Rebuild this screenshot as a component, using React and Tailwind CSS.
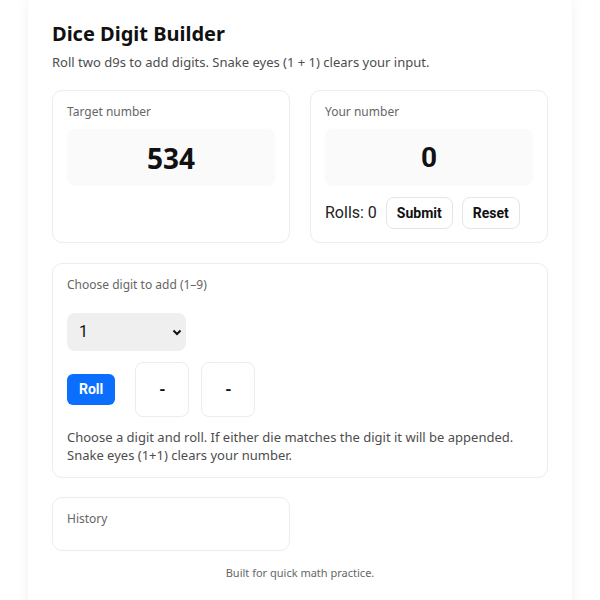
import React, { useState } from "react";

function Card({ className = "", children }) {
  return (
    <div className={`rounded-[10px] border border-[#ececec] bg-white px-[14px] py-[13px] ${className}`}>
      {children}
    </div>
  );
}

function Label({ children }) {
  return <div className="text-[12px] leading-[16px] text-[#666]">{children}</div>;
}

export default function App() {
  const [digit, setDigit] = useState("1");

  return (
    <div className="min-h-screen bg-white font-['Noto_Sans',sans-serif]">
      <div className="mx-auto w-[544px] bg-white px-6 pt-[21px] pb-10 shadow-[0_0_12px_rgba(0,0,0,0.06)]">
        <h1 className="text-[20px] font-bold leading-[26px] text-[#111]">Dice Digit Builder</h1>
        <p className="mt-[6px] text-[13px] leading-[18px] text-[#4d4d4d]">
          Roll two d9s to add digits. Snake eyes (1 + 1) clears your input.
        </p>

        <div className="mt-[19px] grid grid-cols-2 gap-5">
          <Card>
            <Label>Target number</Label>
            <div className="mt-[9px] flex h-[57px] items-center justify-center rounded-lg bg-[#fafafa] text-[28px] font-bold text-[#111]">
              534
            </div>
          </Card>
          <Card>
            <Label>Your number</Label>
            <div className="mt-[9px] flex h-[57px] items-center justify-center rounded-lg bg-[#fafafa] font-['Roboto',sans-serif] text-[28px] font-bold text-[#111]">
              0
            </div>
            <div className="mt-[11px] flex items-center gap-[9px] font-['Roboto',sans-serif]">
              <span className="text-[16px] text-[#222]">Rolls: 0</span>
              <button className="h-8 rounded-lg border border-[#e5e5e5] bg-white px-[10px] text-[14px] font-bold text-[#111]">
                Submit
              </button>
              <button className="h-8 rounded-lg border border-[#e5e5e5] bg-white px-[10px] text-[14px] font-bold text-[#111]">
                Reset
              </button>
            </div>
          </Card>
        </div>

        <Card className="mt-5">
          <Label>Choose digit to add (1–9)</Label>
          <div className="relative mt-5 w-[119px]">
            <select
              value={digit}
              onChange={(e) => setDigit(e.target.value)}
              className="h-[38px] w-full appearance-none rounded-lg bg-[#efefef] pl-[12px] font-['Roboto',sans-serif] text-[16px] text-[#111] outline-none"
            >
              {[1, 2, 3, 4, 5, 6, 7, 8, 9].map((n) => (
                <option key={n} value={n}>
                  {n}
                </option>
              ))}
            </select>
            <svg
              className="pointer-events-none absolute right-[4px] top-[16px]"
              width="10"
              height="7"
              viewBox="0 0 10 7"
            >
              <path d="M1.5 1.5 L5 5 L8.5 1.5" fill="none" stroke="#111" strokeWidth="2" />
            </svg>
          </div>
          <div className="mt-[11px] flex items-center font-['Roboto',sans-serif]">
            <button className="h-[31px] rounded-md bg-[#0b6efd] px-3 text-[14px] font-bold text-white">
              Roll
            </button>
            <div className="ml-5 flex h-[55px] w-[54px] items-center justify-center rounded-lg border border-[#ececec] text-[16px] font-bold text-[#111]">
              -
            </div>
            <div className="ml-3 flex h-[55px] w-[54px] items-center justify-center rounded-lg border border-[#ececec] text-[16px] font-bold text-[#111]">
              -
            </div>
          </div>
          <p className="mt-[11px] text-[13px] leading-[18px] text-[#4d4d4d]">
            Choose a digit and roll. If either die matches the digit it will be appended.
            <br />
            Snake eyes (1+1) clears your number.
          </p>
        </Card>

        <div className="mt-[19px] grid grid-cols-2 gap-5">
          <Card className="h-[54px]">
            <Label>History</Label>
          </Card>
        </div>

        <p className="mt-[14px] text-center text-[11px] leading-[16px] text-[#666]">
          Built for quick math practice.
        </p>
      </div>
    </div>
  );
}
